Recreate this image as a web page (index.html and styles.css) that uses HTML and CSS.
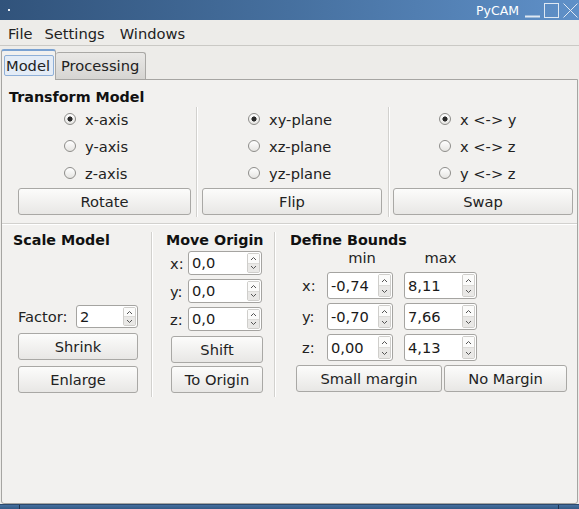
FILE: index.html
```html
<!DOCTYPE html>
<html>
<head>
<meta charset="utf-8">
<link rel="stylesheet" href="styles.css">
</head>
<body>
<div class="window">
  <div class="titlebar">
    <span class="tb-dot"></span>
    <span class="tb-title">PyCAM</span>
    <svg class="tb-btn" width="17" height="20" viewBox="0 0 17 20"><path d="M1 16.5h15" stroke="#dfe8f2" stroke-width="2" fill="none"/></svg>
    <svg class="tb-btn" width="17" height="20" viewBox="0 0 17 20"><rect x="1.5" y="3.5" width="14" height="14" stroke="#dfe8f2" stroke-width="1" fill="none"/></svg>
    <svg class="tb-btn" width="17" height="20" viewBox="0 0 17 20"><path d="M1.5 3.5l14 14M15.5 3.5l-14 14" stroke="#dfe8f2" stroke-width="1" fill="none"/></svg>
  </div>
  <div class="menubar">
    <span class="menu-item m-file">File</span>
    <span class="menu-item m-settings">Settings</span>
    <span class="menu-item">Windows</span>
  </div>
  <div class="tabs">
    <div class="tab tab-active"><span class="tab-focus">Model</span></div>
    <div class="tab tab-inactive">Processing</div>
  </div>
  <div class="panel">
    <section class="transform">
      <h2 class="heading">Transform Model</h2>
      <div class="cols3">
        <div class="tcol tcol-first">
          <div class="radios">
            <div class="radio-row"><span class="radio checked"></span><span>x-axis</span></div>
            <div class="radio-row"><span class="radio"></span><span>y-axis</span></div>
            <div class="radio-row"><span class="radio"></span><span>z-axis</span></div>
          </div>
          <div class="btn">Rotate</div>
        </div>
        <div class="vsep vsep-a"></div>
        <div class="tcol">
          <div class="radios">
            <div class="radio-row"><span class="radio checked"></span><span>xy-plane</span></div>
            <div class="radio-row"><span class="radio"></span><span>xz-plane</span></div>
            <div class="radio-row"><span class="radio"></span><span>yz-plane</span></div>
          </div>
          <div class="btn">Flip</div>
        </div>
        <div class="vsep vsep-b"></div>
        <div class="tcol">
          <div class="radios">
            <div class="radio-row"><span class="radio checked"></span><span>x &lt;-&gt; y</span></div>
            <div class="radio-row"><span class="radio"></span><span>x &lt;-&gt; z</span></div>
            <div class="radio-row"><span class="radio"></span><span>y &lt;-&gt; z</span></div>
          </div>
          <div class="btn">Swap</div>
        </div>
      </div>
    </section>
    <div class="hsep"></div>
    <div class="lower">
      <section class="scol scale">
        <h2 class="heading">Scale Model</h2>
        <div class="factor-row">
          <span class="factor-label">Factor:</span>
          <div class="spin spin-factor"><span class="spin-val">2</span><span class="arrows"><span class="arr arr-up"><svg width="7" height="5" viewBox="0 0 7 5"><path d="M1 4l2.5-2.5L6 4" stroke="#555" fill="none"/></svg></span><span class="arr arr-down"><svg width="7" height="5" viewBox="0 0 7 5"><path d="M1 1l2.5 2.5L6 1" stroke="#555" fill="none"/></svg></span></span></div>
        </div>
        <div class="btn btn-scale btn-shrink">Shrink</div>
        <div class="btn btn-scale btn-enlarge">Enlarge</div>
      </section>
      <div class="vsep vsep-c"></div>
      <section class="scol origin">
        <h2 class="heading">Move Origin</h2>
        <div class="orow orow-first"><span class="olabel">x:</span><div class="spin spin-origin"><span class="spin-val">0,0</span><span class="arrows"><span class="arr arr-up"><svg width="7" height="5" viewBox="0 0 7 5"><path d="M1 4l2.5-2.5L6 4" stroke="#555" fill="none"/></svg></span><span class="arr arr-down"><svg width="7" height="5" viewBox="0 0 7 5"><path d="M1 1l2.5 2.5L6 1" stroke="#555" fill="none"/></svg></span></span></div></div>
        <div class="orow"><span class="olabel">y:</span><div class="spin spin-origin"><span class="spin-val">0,0</span><span class="arrows"><span class="arr arr-up"><svg width="7" height="5" viewBox="0 0 7 5"><path d="M1 4l2.5-2.5L6 4" stroke="#555" fill="none"/></svg></span><span class="arr arr-down"><svg width="7" height="5" viewBox="0 0 7 5"><path d="M1 1l2.5 2.5L6 1" stroke="#555" fill="none"/></svg></span></span></div></div>
        <div class="orow"><span class="olabel">z:</span><div class="spin spin-origin"><span class="spin-val">0,0</span><span class="arrows"><span class="arr arr-up"><svg width="7" height="5" viewBox="0 0 7 5"><path d="M1 4l2.5-2.5L6 4" stroke="#555" fill="none"/></svg></span><span class="arr arr-down"><svg width="7" height="5" viewBox="0 0 7 5"><path d="M1 1l2.5 2.5L6 1" stroke="#555" fill="none"/></svg></span></span></div></div>
        <div class="btn btn-origin btn-shift">Shift</div>
        <div class="btn btn-origin btn-toorigin">To Origin</div>
      </section>
      <div class="vsep vsep-d"></div>
      <section class="scol bounds">
        <h2 class="heading">Define Bounds</h2>
        <div class="bgrid">
          <span></span><span class="bhead bhead-min">min</span><span class="bhead">max</span>
          <span class="blabel">x:</span>
          <div class="spin spin-bmin"><span class="spin-val">-0,74</span><span class="arrows"><span class="arr arr-up"><svg width="7" height="5" viewBox="0 0 7 5"><path d="M1 4l2.5-2.5L6 4" stroke="#555" fill="none"/></svg></span><span class="arr arr-down"><svg width="7" height="5" viewBox="0 0 7 5"><path d="M1 1l2.5 2.5L6 1" stroke="#555" fill="none"/></svg></span></span></div>
          <div class="spin spin-bmax"><span class="spin-val">8,11</span><span class="arrows"><span class="arr arr-up"><svg width="7" height="5" viewBox="0 0 7 5"><path d="M1 4l2.5-2.5L6 4" stroke="#555" fill="none"/></svg></span><span class="arr arr-down"><svg width="7" height="5" viewBox="0 0 7 5"><path d="M1 1l2.5 2.5L6 1" stroke="#555" fill="none"/></svg></span></span></div>
          <span class="blabel">y:</span>
          <div class="spin spin-bmin"><span class="spin-val">-0,70</span><span class="arrows"><span class="arr arr-up"><svg width="7" height="5" viewBox="0 0 7 5"><path d="M1 4l2.5-2.5L6 4" stroke="#555" fill="none"/></svg></span><span class="arr arr-down"><svg width="7" height="5" viewBox="0 0 7 5"><path d="M1 1l2.5 2.5L6 1" stroke="#555" fill="none"/></svg></span></span></div>
          <div class="spin spin-bmax"><span class="spin-val">7,66</span><span class="arrows"><span class="arr arr-up"><svg width="7" height="5" viewBox="0 0 7 5"><path d="M1 4l2.5-2.5L6 4" stroke="#555" fill="none"/></svg></span><span class="arr arr-down"><svg width="7" height="5" viewBox="0 0 7 5"><path d="M1 1l2.5 2.5L6 1" stroke="#555" fill="none"/></svg></span></span></div>
          <span class="blabel">z:</span>
          <div class="spin spin-bmin"><span class="spin-val">0,00</span><span class="arrows"><span class="arr arr-up"><svg width="7" height="5" viewBox="0 0 7 5"><path d="M1 4l2.5-2.5L6 4" stroke="#555" fill="none"/></svg></span><span class="arr arr-down"><svg width="7" height="5" viewBox="0 0 7 5"><path d="M1 1l2.5 2.5L6 1" stroke="#555" fill="none"/></svg></span></span></div>
          <div class="spin spin-bmax"><span class="spin-val">4,13</span><span class="arrows"><span class="arr arr-up"><svg width="7" height="5" viewBox="0 0 7 5"><path d="M1 4l2.5-2.5L6 4" stroke="#555" fill="none"/></svg></span><span class="arr arr-down"><svg width="7" height="5" viewBox="0 0 7 5"><path d="M1 1l2.5 2.5L6 1" stroke="#555" fill="none"/></svg></span></span></div>
        </div>
        <div class="bbuttons">
          <div class="btn btn-small">Small margin</div>
          <div class="btn btn-nomargin">No Margin</div>
        </div>
      </section>
    </div>
  </div>
  <div class="taskbar"><span class="task-div task-div-l"></span><span class="task-div task-div-r"></span></div>
</div>
</body>
</html>
```

FILE: styles.css
```css
* { box-sizing: border-box; }
html, body { margin: 0; padding: 0; }
body {
  width: 579px;
  height: 509px;
  overflow: hidden;
  font-family: "DejaVu Sans", sans-serif;
  font-size: 14.67px;
  color: #222;
  background: #edece9;
}
.window { width: 579px; height: 509px; display: flex; flex-direction: column; }

/* title bar */
.titlebar {
  height: 20px;
  flex: none;
  display: flex;
  align-items: center;
  background: linear-gradient(to right, #31537b 0%, #46709f 50%, #5f90c8 100%);
  color: #fff;
}
.tb-dot { width: 2px; height: 2px; background: #e8eef5; margin-left: 8px; }
.tb-title { margin-left: auto; font-size: 12.5px; margin-right: 5px; padding-top: 1px; }
.tb-btn { display: block; margin-right: 2px; }
.tb-btn:last-child { margin-right: 0; }

/* menu */
.menubar {
  height: 26px;
  flex: none;
  display: flex;
  align-items: center;
  padding: 2px 0 0 8px;
  border-bottom: 1px solid #cac9c5;
  background: #edece9;
}
.menu-item { line-height: 17px; }
.m-file { margin-right: 12px; }
.m-settings { margin-right: 15px; }

/* tabs */
.tabs {
  height: 33px;
  flex: none;
  display: flex;
  align-items: flex-end;
  padding-left: 1px;
  background: #edece9;
}
.tab { border: 1px solid #a9a8a5; border-bottom: none; border-radius: 3px 3px 0 0; }
.tab-active {
  position: relative;
  z-index: 1;
  width: 55px;
  height: 31px;
  margin-bottom: -1px;
  border-top: 2px solid #7aa2d2;
  background: #f2f1ef;
  padding: 4px 1px 0 2px;
}
.tab-focus {
  display: block;
  height: 21px;
  line-height: 19px;
  border: 1px solid #8fb0d8;
  border-radius: 2px;
  background: #e4ecf6;
  padding-left: 1px;
}
.tab-inactive {
  width: 90px;
  height: 27px;
  padding: 4px 0 0 5px;
  line-height: 17px;
  background: linear-gradient(#e9e8e6, #d6d5d2);
  border-left: none;
}

/* panel */
.panel {
  flex: none;
  height: 425px;
  margin: 0 1px;
  border: 1px solid #a6a5a2;
  border-radius: 0 0 3px 3px;
  background: #f2f1ef;
}
.heading { margin: 0; font-size: 14.3px; font-weight: bold; line-height: 18px; color: #111; }

.transform { padding-left: 7px; padding-top: 8px; }
.cols3 { display: flex; height: 111px; margin-left: 9px; }
.tcol { width: 180px; display: flex; flex-direction: column; }
.tcol-first { width: 173px; }
.radios { padding-left: 46px; }
.radio-row { height: 27px; display: flex; align-items: center; }
.radio {
  width: 12px; height: 12px;
  border: 1px solid #8e8d8a;
  border-radius: 50%;
  background: linear-gradient(#ffffff, #e6e5e2);
  margin-right: 9px;
  margin-top: -1px;
}
.radio.checked {
  background: radial-gradient(circle at 50% 50%, #2b2b2b 0, #2b2b2b 2.2px, rgba(0,0,0,0) 2.9px), linear-gradient(#ffffff, #e6e5e2);
}

.btn {
  height: 27px;
  display: flex;
  align-items: center;
  justify-content: center;
  border: 1px solid #a9a8a5;
  border-radius: 3px;
  background: linear-gradient(#fcfcfb, #e8e7e5);
  color: #222;
}
.tcol .btn { margin-top: 1px; }

.vsep { width: 2px; border-left: 1px solid #d2d1ce; border-right: 1px solid #ffffff; }
.vsep-a { margin: 1px 4px 0 5px; }
.vsep-b { margin: 1px 3px 0 6px; }

.hsep { height: 2px; margin-top: 6px; border-top: 1px solid #d2d1ce; border-bottom: 1px solid #ffffff; }

/* lower area */
.lower { display: flex; height: 172px; padding: 6px 0 0 11px; }
.scol { display: flex; flex-direction: column; }
.vsep-c { margin: 1px 13px 0 5px; }
.vsep-d { margin: 1px 14px 0 5px; }

.scale { width: 133px; padding-bottom: 4px; }
.factor-row { display: flex; align-items: center; margin-top: auto; padding-left: 5px; }
.factor-label { width: 58px; }
.btn-scale { width: 120px; margin-left: 5px; }
.btn-shrink { margin-top: 5px; }
.btn-enlarge { margin-top: 6px; }

.spin {
  height: 24px;
  display: flex;
  border: 1px solid #a5a4a1;
  border-radius: 3px;
  background: #fff;
}
.spin-val { flex: 1; padding-left: 3px; line-height: 22px; color: #1a1a1a; }
.arrows {
  width: 13px;
  display: flex;
  flex-direction: column;
  margin: 1px 1px 1px 0;
  border: 1px solid #cfcecb;
  border-radius: 2px;
}
.arr { flex: 1; display: flex; align-items: center; justify-content: center; }
.arr-up { background: #fbfbfa; border-bottom: 1px solid #dcdbd8; }
.arr-down { background: #e9e8e6; }
.spin-factor { width: 62px; height: 23px; }

.origin { width: 103px; }
.orow { display: flex; align-items: center; padding-left: 4px; margin-top: 4px; }
.orow-first { margin-top: 2px; }
.olabel { width: 18px; }
.spin-origin { width: 74px; }
.btn-origin { width: 92px; margin-left: 5px; }
.btn-shift { margin-top: 5px; }
.btn-toorigin { margin-top: 3px; }

.bounds { flex: 1; }
.bgrid {
  display: grid;
  grid-template-columns: 25px 77px 73px;
  row-gap: 4px;
  margin-left: 12px;
  align-items: center;
}
.bgrid .spin { height: 27px; }
.bgrid .spin-val { line-height: 25px; }
.spin-bmin { width: 66px; }
.bhead { text-align: center; line-height: 18px; margin-bottom: 1px; }
.bhead-min { width: 66px; margin-left: 2px; }
.bbuttons { display: flex; gap: 2px; margin: 4px 0 0 6px; }
.btn-small { width: 146px; }
.btn-nomargin { width: 123px; }

/* taskbar */
.taskbar {
  flex: 1;
  display: flex;
  background: linear-gradient(#46709f, #335985);
  border-top: 1px solid #2c4a6e;
}
.task-div { width: 1px; background: #1d3350; }
.task-div-l { margin-left: 19px; }
.task-div-r { margin-left: auto; margin-right: 20px; }
```
